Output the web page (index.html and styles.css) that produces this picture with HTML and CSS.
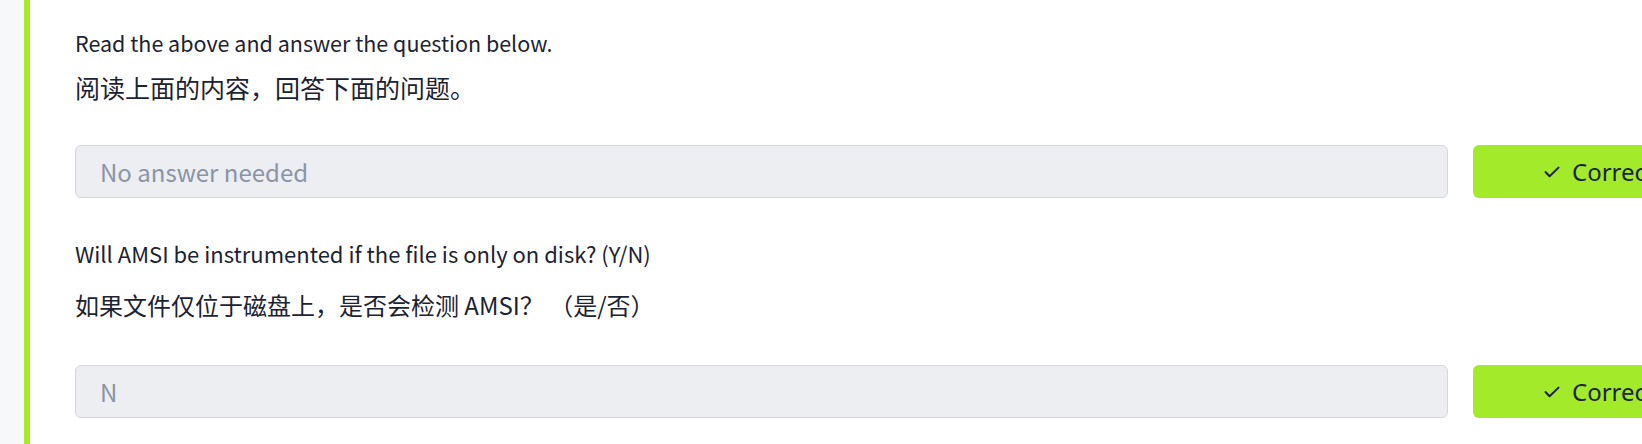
FILE: index.html
```html
<!DOCTYPE html>
<html lang="en">
<head>
<meta charset="utf-8">
<title>Task questions</title>
<link rel="stylesheet" href="styles.css">
</head>
<body>
<div class="page">
  <div class="side-strip"></div>
  <main class="task">
    <section class="question q-first">
      <p class="q-en">Read the above and answer the question below.</p>
      <p class="q-zh">阅读上面的内容，回答下面的问题。</p>
      <div class="answer-row">
        <div class="answer-input placeholder">No answer needed</div>
        <div class="correct-btn">
          <svg class="check" width="16" height="12" viewBox="0 0 16 12" aria-hidden="true"><path d="M1.5 6 L5.6 10.2 L14.5 1.6" fill="none" stroke="#1c2333" stroke-width="2" stroke-linecap="round" stroke-linejoin="round"/></svg>
          <span class="btn-label">Correct Answer</span>
        </div>
      </div>
    </section>
    <section class="question q-second">
      <p class="q-en">Will AMSI be instrumented if the file is only on disk? (Y/N)</p>
      <p class="q-zh">如果文件仅位于磁盘上，是否会检测 AMSI？ （是/否）</p>
      <div class="answer-row">
        <div class="answer-input">N</div>
        <div class="correct-btn">
          <svg class="check" width="16" height="12" viewBox="0 0 16 12" aria-hidden="true"><path d="M1.5 6 L5.6 10.2 L14.5 1.6" fill="none" stroke="#1c2333" stroke-width="2" stroke-linecap="round" stroke-linejoin="round"/></svg>
          <span class="btn-label">Correct Answer</span>
        </div>
      </div>
    </section>
  </main>
</div>
</body>
</html>
```

FILE: styles.css
```css
html, body {
  margin: 0;
  padding: 0;
  background: #ffffff;
  overflow: hidden;
}

body {
  font-family: "Noto Sans CJK SC", "Noto Sans", sans-serif;
  color: #1c2333;
}

.page {
  display: flex;
  min-height: 444px;
}

.side-strip {
  width: 24px;
  flex: 0 0 24px;
  background: #f7f8fa;
}

.task {
  flex: 1 1 auto;
  min-width: 0;
  border-left: 6px solid #a3ea2a;
  padding-left: 45px;
  padding-top: 28px;
}

.question p {
  margin: 0;
}

.q-en {
  font-size: 22px;
  line-height: 30px;
}

.q-zh {
  font-size: 24px;
  line-height: 34px;
}

.q-first .q-en {
  font-size: 21.5px;
}

.q-first .q-zh {
  font-size: 25px;
  margin-top: 12px;
}

.q-second {
  margin-top: 40px;
}

.q-second .q-zh {
  margin-top: 20px;
}

.answer-row {
  display: flex;
  gap: 25px;
  width: 1654px;
  margin-top: 41px;
}

.q-second .answer-row {
  margin-top: 43px;
}

.answer-input {
  flex: 1 1 auto;
  min-width: 0;
  box-sizing: border-box;
  height: 53px;
  border: 1px solid #d3d7df;
  border-radius: 6px;
  background: #eceef2;
  padding-left: 24px;
  display: flex;
  align-items: center;
  font-size: 24px;
  color: #8a94a7;
}

.correct-btn {
  flex: 0 0 256px;
  min-width: 0;
  box-sizing: border-box;
  height: 53px;
  border-radius: 6px;
  background: #a3ea2a;
  display: flex;
  align-items: center;
  padding-left: 71px;
  gap: 12px;
  font-family: "Noto Sans", "Open Sans", sans-serif;
  font-size: 24px;
  color: #1c2333;
  white-space: nowrap;
}

.check {
  flex: 0 0 auto;
}

.btn-label {
  flex: 0 0 auto;
}
```
